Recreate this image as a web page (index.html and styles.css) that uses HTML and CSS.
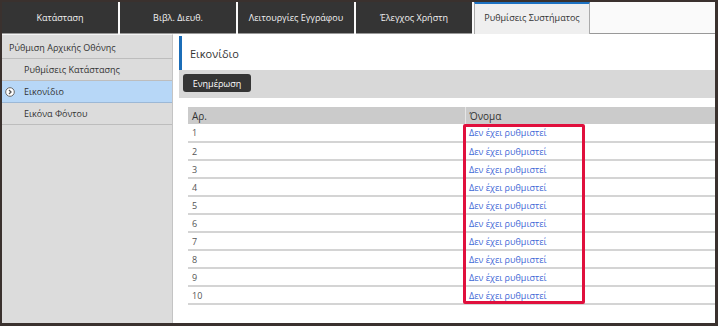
FILE: index.html
```html
<!DOCTYPE html>
<html>
<head>
  <title>Ρυθμίσεις Συστήματος</title>
  <link rel="stylesheet" href="styles.css">
</head>
<body>
    <div class="frame">
        <div class="tab-bar">
            <div class="tab">Κατάσταση</div>
            <div class="tab">Βιβλ. Διευθ.</div>
            <div class="tab">Λειτουργίες Εγγράφου</div>
            <div class="tab">Έλεγχος Χρήστη</div>
            <div class="tab active">Ρυθμίσεις Συστήματος</div>
            <div class="tab-rest"></div>
        </div>

        <div class="content">
            <div class="sidebar">
                <div class="side-item">Ρύθμιση Αρχικής Οθόνης</div>
                <div class="side-item sub">Ρυθμίσεις Κατάστασης</div>
                <div class="side-item sub selected">
                    <svg class="side-icon" width="10" height="10" viewBox="0 0 10 10">
                        <circle cx="5" cy="5" r="4.3" fill="#fff" stroke="#666" stroke-width="1"/>
                        <path d="M4 3 L6 5 L4 7" fill="none" stroke="#555" stroke-width="1.3"/>
                    </svg>
                    Εικονίδιο
                </div>
                <div class="side-item sub">Εικόνα Φόντου</div>
            </div>

            <div class="main">
                <div class="page-title">Εικονίδιο</div>
                <div class="toolbar">
                    <button class="btn">Ενημέρωση</button>
                </div>

                <div class="table-wrap">
                    <table class="list">
                        <thead>
                            <tr><th class="col-no">Αρ.</th><th>Όνομα</th></tr>
                        </thead>
                        <tbody>
                            <tr><td>1</td><td><a href="#">Δεν έχει ρυθμιστεί</a></td></tr>
                            <tr><td>2</td><td><a href="#">Δεν έχει ρυθμιστεί</a></td></tr>
                            <tr><td>3</td><td><a href="#">Δεν έχει ρυθμιστεί</a></td></tr>
                            <tr><td>4</td><td><a href="#">Δεν έχει ρυθμιστεί</a></td></tr>
                            <tr><td>5</td><td><a href="#">Δεν έχει ρυθμιστεί</a></td></tr>
                            <tr><td>6</td><td><a href="#">Δεν έχει ρυθμιστεί</a></td></tr>
                            <tr><td>7</td><td><a href="#">Δεν έχει ρυθμιστεί</a></td></tr>
                            <tr><td>8</td><td><a href="#">Δεν έχει ρυθμιστεί</a></td></tr>
                            <tr><td>9</td><td><a href="#">Δεν έχει ρυθμιστεί</a></td></tr>
                            <tr><td>10</td><td><a href="#">Δεν έχει ρυθμιστεί</a></td></tr>
                        </tbody>
                    </table>
                    <div class="highlight"></div>
                </div>
            </div>
        </div>
    </div>
</body>
</html>
```

FILE: styles.css
```css
* {
    box-sizing: border-box;
}

body {
    margin: 0;
    padding: 0;
    font-family: 'Open Sans', 'Noto Sans', sans-serif;
    font-size: 9px;
    color: #333;
    background-color: #fff;
}

.frame {
    width: 718px;
    height: 326px;
    border: 2px solid #3a312e;
    border-right-width: 3px;
    border-bottom-width: 3px;
    display: flex;
    flex-direction: column;
    background-color: #fff;
}

.tab-bar {
    display: flex;
    height: 32px;
    background-color: #fafafa;
}

.tab {
    width: 116px;
    margin-right: 2px;
    background-color: #343434;
    color: #f2f2f2;
    display: flex;
    align-items: center;
    justify-content: center;
    border-bottom: 1px solid #999;
}

.tab.active {
    background-color: #efefef;
    color: #333;
    border-top: 2px solid #1d72c2;
    border-left: 1px solid #aaa;
    border-right: 1px solid #aaa;
    border-bottom: none;
    align-items: flex-start;
    padding-top: 7px;
    margin-right: 0;
}

.tab-rest {
    flex: 1;
    border-bottom: 1px solid #999;
}

.content {
    flex: 1;
    display: flex;
}

.sidebar {
    width: 171px;
    background-color: #dcdcdc;
    border-right: 1px solid #c4c4c4;
    padding-top: 2px;
    border-top: 1px solid #f4f4f4;
}

.side-item {
    height: 22px;
    display: flex;
    align-items: center;
    padding-left: 7px;
    border-bottom: 1px solid #bdbdbd;
    color: #333;
}

.side-item.sub {
    padding-left: 22px;
}

.side-item.selected {
    background-color: #b7d7f7;
    padding-left: 3px;
    border-bottom-color: #9cb8d6;
}

.side-icon {
    margin-right: 9px;
}

.main {
    flex: 1;
    padding-left: 6px;
    padding-top: 2px;
}

.page-title {
    height: 34px;
    border-left: 3px solid #1b6db8;
    padding-left: 8px;
    display: flex;
    align-items: center;
    font-size: 11px;
    color: #333;
}

.toolbar {
    background-color: #d8d8d8;
    height: 28px;
    padding: 4px;
}

.btn {
    background-color: #353535;
    color: #fff;
    border: none;
    border-radius: 3px;
    height: 18px;
    width: 68px;
    font-family: 'Open Sans', 'Noto Sans', sans-serif;
    font-size: 9px;
    padding: 0;
}

.table-wrap {
    position: relative;
    margin-top: 9px;
    margin-left: 9px;
}

.list {
    width: 100%;
    border-collapse: collapse;
}

.list th {
    background-color: #cbcbcb;
    text-align: left;
    font-weight: normal;
    font-size: 10px;
    color: #333;
    height: 17px;
    padding: 0 4px;
    border-left: 1px solid #e6e6e6;
}

.list th.col-no {
    width: 277px;
    border-left: none;
}

.list td {
    height: 18px;
    padding: 0 4px;
    border-bottom: 2px solid #d4d4d4;
    color: #555;
}

.list td a {
    color: #3f68d6;
    text-decoration: none;
}

.highlight {
    position: absolute;
    left: 275px;
    top: 17px;
    width: 122px;
    height: 180px;
    border: 3px solid #e0103d;
    border-radius: 2px;
}
```
